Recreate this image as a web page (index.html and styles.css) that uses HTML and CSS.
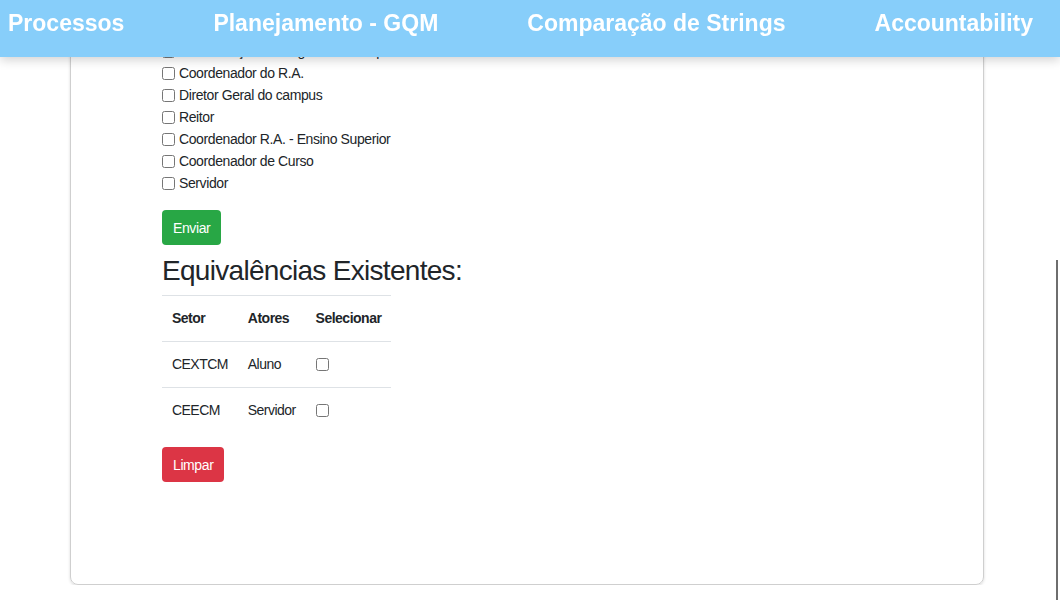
FILE: index.html
```html
<!DOCTYPE html>
<html lang="pt-BR">
<head>
<meta charset="utf-8">
<title>Equivalências</title>
<link rel="stylesheet" href="styles.css">
</head>
<body>
<header class="topbar">
  <nav class="nav">
    <a class="nav-link" href="#">Processos</a>
    <a class="nav-link" href="#">Planejamento - GQM</a>
    <a class="nav-link" href="#">Comparação de Strings</a>
    <a class="nav-link" href="#">Accountability</a>
  </nav>
</header>

<main class="card">
  <form class="roles">
    <label class="role"><input type="checkbox"> Coordenação de Registro do campus</label>
    <label class="role"><input type="checkbox"> Coordenador do R.A.</label>
    <label class="role"><input type="checkbox"> Diretor Geral do campus</label>
    <label class="role"><input type="checkbox"> Reitor</label>
    <label class="role"><input type="checkbox"> Coordenador R.A. - Ensino Superior</label>
    <label class="role"><input type="checkbox"> Coordenador de Curso</label>
    <label class="role"><input type="checkbox"> Servidor</label>
  </form>
  <button class="btn btn-green" type="button">Enviar</button>

  <h2 class="title">Equivalências Existentes:</h2>
  <table class="table">
    <thead>
      <tr><th>Setor</th><th>Atores</th><th>Selecionar</th></tr>
    </thead>
    <tbody>
      <tr><td>CEXTCM</td><td>Aluno</td><td><input type="checkbox"></td></tr>
      <tr><td>CEECM</td><td>Servidor</td><td><input type="checkbox"></td></tr>
    </tbody>
  </table>
  <button class="btn btn-red" type="button">Limpar</button>
</main>

<div class="scroll-line"></div>
</body>
</html>
```

FILE: styles.css
```css
* { box-sizing: border-box; }

html, body {
  margin: 0;
  padding: 0;
  background: #fff;
  font-family: "Liberation Sans", Arial, sans-serif;
  color: #212529;
  font-size: 14px;
  overflow: hidden;
}

.topbar {
  position: fixed;
  top: 0;
  left: 0;
  right: 0;
  height: 57px;
  background: #87cefa;
  box-shadow: 0 3px 10px rgba(0, 0, 0, 0.18);
  z-index: 10;
}

.nav {
  display: flex;
  justify-content: space-between;
  align-items: center;
  height: 46px;
  padding: 0 27px 0 8px;
}

.nav-link {
  color: #fff;
  text-decoration: none;
  font-weight: bold;
  font-size: 23px;
}

.card {
  margin: 10px 0 0 70px;
  width: 914px;
  border: 1px solid #cfcfcf;
  border-radius: 8px;
  box-shadow: 0 1px 3px rgba(0, 0, 0, 0.15);
  padding: 29px 91px 102px;
  letter-spacing: -0.4px;
}

.roles {
  display: flex;
  flex-direction: column;
}

.role {
  display: flex;
  align-items: center;
  height: 22px;
  line-height: 22px;
}

.role input,
.table input {
  width: 13px;
  height: 13px;
  margin: 0 4px 0 0;
}

.btn {
  display: block;
  height: 35px;
  padding: 0 11px;
  border: none;
  border-radius: 4px;
  color: #fff;
  font-family: inherit;
  font-size: 14px;
  letter-spacing: -0.4px;
}

.btn-green {
  margin-top: 16px;
  background: #28a745;
}

.btn-red {
  margin-top: 14px;
  background: #dc3545;
}

.title {
  margin: 9px 0 7px;
  font-size: 28px;
  font-weight: normal;
  line-height: 34px;
  letter-spacing: -0.7px;
}

.table {
  border-collapse: collapse;
}

.table th,
.table td {
  padding: 12px 10px;
  line-height: 21px;
  text-align: left;
  vertical-align: middle;
  border-top: 1px solid #dee2e6;
}

.table th {
  font-weight: bold;
  letter-spacing: -0.5px;
}

.table td {
  letter-spacing: -0.55px;
}

.table td input {
  display: block;
}

.scroll-line {
  position: fixed;
  top: 260px;
  bottom: 0;
  right: 2px;
  width: 2px;
  background: #6e6e6e;
}
```
